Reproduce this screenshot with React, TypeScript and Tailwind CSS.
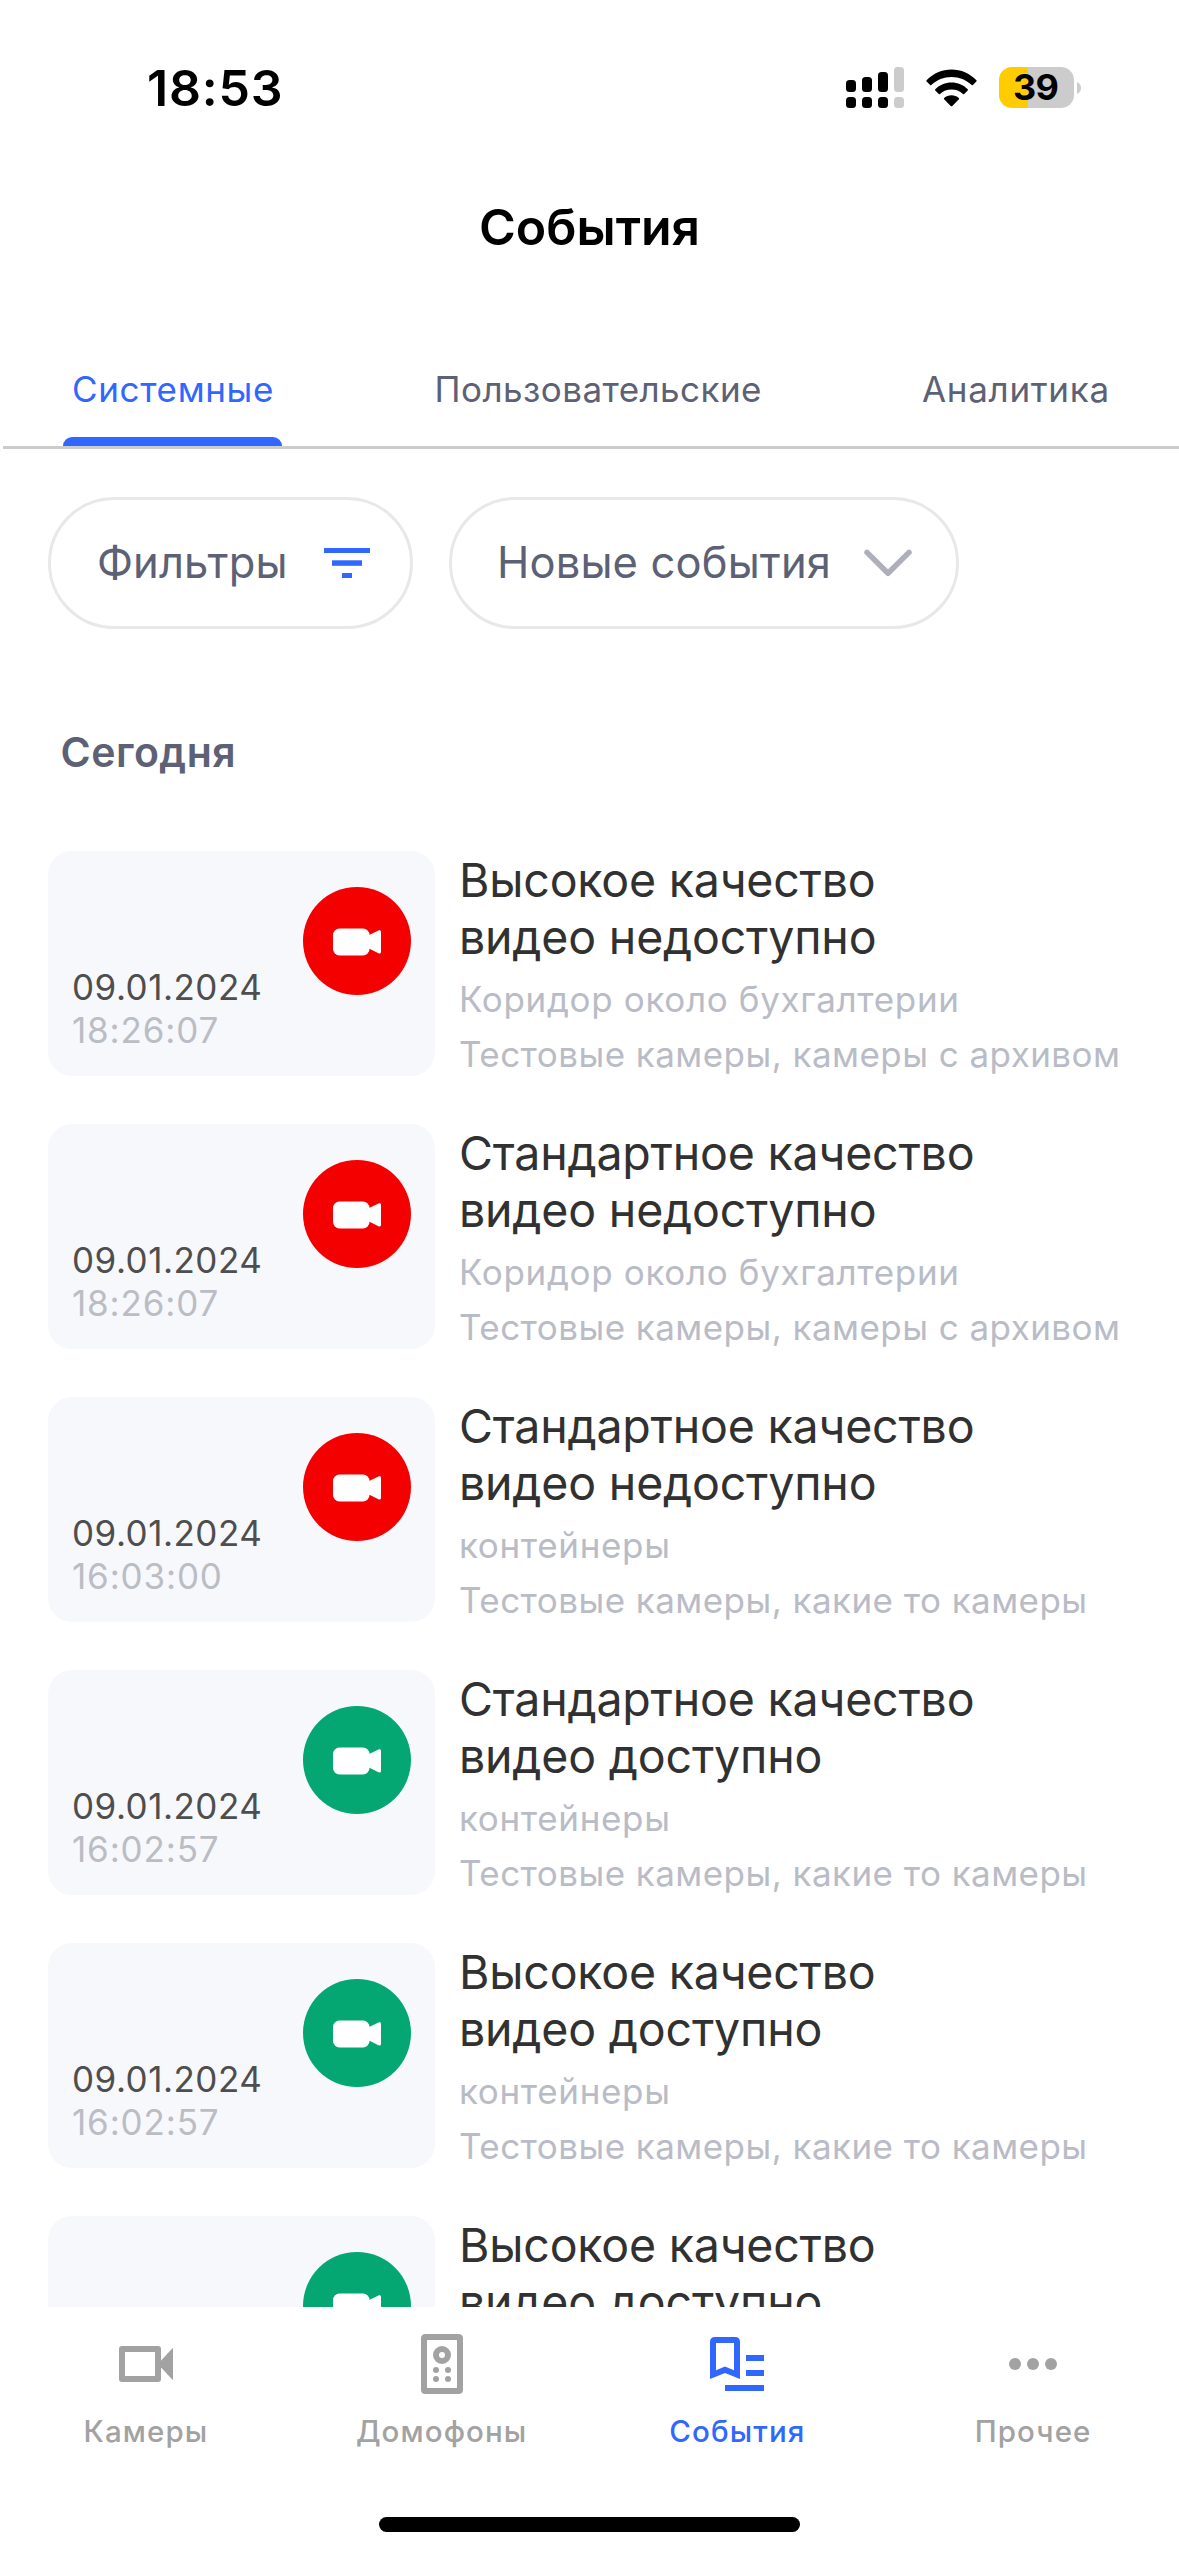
import React from 'react';

type EventItem = {
  quality: string;
  available: boolean;
  date?: string;
  time?: string;
  camera?: string;
  groups?: string;
};

const events: EventItem[] = [
  { quality: 'Высокое качество', available: false, date: '09.01.2024', time: '18:26:07', camera: 'Коридор около бухгалтерии', groups: 'Тестовые камеры, камеры с архивом' },
  { quality: 'Стандартное качество', available: false, date: '09.01.2024', time: '18:26:07', camera: 'Коридор около бухгалтерии', groups: 'Тестовые камеры, камеры с архивом' },
  { quality: 'Стандартное качество', available: false, date: '09.01.2024', time: '16:03:00', camera: 'контейнеры', groups: 'Тестовые камеры, какие то камеры' },
  { quality: 'Стандартное качество', available: true, date: '09.01.2024', time: '16:02:57', camera: 'контейнеры', groups: 'Тестовые камеры, какие то камеры' },
  { quality: 'Высокое качество', available: true, date: '09.01.2024', time: '16:02:57', camera: 'контейнеры', groups: 'Тестовые камеры, какие то камеры' },
  { quality: 'Высокое качество', available: true },
];

const SignalIcon = () => (
  <svg width="58" height="41" viewBox="0 0 58 41">
    <rect x="0" y="13" width="10" height="12" rx="3.5" />
    <rect x="16" y="10" width="10" height="15" rx="3.5" />
    <rect x="32" y="5" width="10" height="20" rx="3.5" />
    <rect x="48" y="0" width="10" height="25" rx="3.5" fill="#cccccc" />
    <rect x="0" y="30" width="10" height="11" rx="3.5" />
    <rect x="16" y="30" width="10" height="11" rx="3.5" />
    <rect x="32" y="30" width="10" height="11" rx="3.5" />
    <rect x="48" y="30" width="10" height="11" rx="3.5" fill="#cccccc" />
  </svg>
);

const WifiIcon = () => (
  <svg width="51" height="38" viewBox="0 0 51 38">
    <path d="M0.6 11.2C7.3 4.4 16 0.5 25.5 0.5S43.7 4.4 50.4 11.2C50.8 11.6 50.8 12 50.4 12.4L46.9 16C46.5 16.4 46.1 16.3 45.7 16C40.3 10.8 33.2 7.9 25.5 7.9S10.7 10.8 5.3 16C4.9 16.3 4.5 16.4 4.1 16L0.6 12.4C0.2 12 0.2 11.6 0.6 11.2Z" />
    <path d="M9.3 20.2C13.7 15.9 19.3 13.5 25.5 13.5S37.3 15.9 41.7 20.2C42.1 20.6 42.1 21 41.7 21.4L38.2 24.9C37.8 25.3 37.4 25.2 37 24.9C33.8 22 29.9 20.5 25.5 20.5S17.2 22 14 24.9C13.6 25.2 13.2 25.3 12.8 24.9L9.3 21.4C8.9 21 8.9 20.6 9.3 20.2Z" />
    <path d="M18.2 29C20.2 27.3 22.7 26.3 25.5 26.3S30.8 27.3 32.8 29C33.3 29.4 33.3 29.9 32.9 30.3L26.3 36.9C25.8 37.4 25.2 37.4 24.7 36.9L18.1 30.3C17.7 29.9 17.7 29.4 18.2 29Z" />
  </svg>
);

const Battery = () => (
  <div className="flex items-center">
    <div className="flex h-[41px] w-[75px] items-center justify-center rounded-[13px] bg-[linear-gradient(to_right,#ffcc00_29px,#cccccc_29px)]">
      <span className="mr-[2px] text-[36px] leading-[41px] font-bold tracking-[-0.8px]">39</span>
    </div>
    <svg className="ml-[3px]" width="4" height="12" viewBox="0 0 4 12">
      <path d="M0 0C2.5 1 4 3.3 4 6S2.5 11 0 12Z" fill="#cccccc" />
    </svg>
  </div>
);

const StatusBar = () => (
  <div className="flex h-[197px] shrink-0 pt-[58px] pl-[147px]">
    <span className="w-[699px] text-[50px] leading-[60px] font-semibold tracking-[0.8px]">18:53</span>
    <div className="mt-[9px] flex h-[41px] items-center gap-[22px]">
      <SignalIcon />
      <WifiIcon />
      <Battery />
    </div>
  </div>
);

const FilterIcon = () => (
  <svg width="46" height="30" viewBox="0 0 46 30" fill="#3067ff">
    <rect x="0" y="0" width="46" height="5" />
    <rect x="8" y="12.3" width="30" height="5.5" />
    <rect x="18" y="25" width="10" height="5" />
  </svg>
);

const ChevronIcon = () => (
  <svg width="48" height="28" viewBox="0 0 48 28" fill="none" stroke="#adafba" strokeWidth="5.5" strokeLinecap="round" strokeLinejoin="round">
    <path d="M3 3.4L24 24.3L45 3.4" />
  </svg>
);

const VideoIcon = () => (
  <svg width="48" height="28" viewBox="0 0 48 28" fill="#ffffff">
    <rect x="0" y="0.5" width="36.5" height="27" rx="6.5" />
    <path d="M35 7.6L45.5 2.5C46.9 1.8 48 2.5 48 4V23.7C48 25.2 46.9 25.9 45.5 25.2L35 20.1Z" />
  </svg>
);

const EventRow: React.FC<{ item: EventItem }> = ({ item }) => (
  <article className="flex h-[225px] shrink-0 gap-6">
    <div className="flex w-[387px] shrink-0 rounded-[24px] bg-[#f7f8fc] px-6">
      {item.date && (
        <div className="self-end pb-6 text-[35px] leading-[43px]">
          <p className="tracking-[0.5px] text-[#4e4e4e]">{item.date}</p>
          <p className="tracking-[0.85px] text-[#bbbdc5]">{item.time}</p>
        </div>
      )}
      <div className={`mt-9 ml-auto flex size-[108px] items-center justify-center rounded-full pt-px ${item.available ? 'bg-[#04a771]' : 'bg-[#f50000]'}`}>
        <VideoIcon />
      </div>
    </div>
    <div className="pt-px whitespace-nowrap">
      <h3 className="text-[46.5px] leading-[57px] tracking-[-0.2px] text-[#313131]">
        {item.quality}
        <br />
        {item.available ? 'видео доступно' : 'видео недоступно'}
      </h3>
      {item.camera && (
        <div className="mt-[6px] text-[35px] leading-[55px] text-[#b9bcc6]">
          <p className="tracking-[0.66px]">{item.camera}</p>
          <p className="tracking-[0.45px]">{item.groups}</p>
        </div>
      )}
    </div>
  </article>
);

const navItems = [
  {
    label: 'Камеры',
    active: false,
    icon: (
      <>
        <path fillRule="evenodd" d="M4 6H16Q17 6 17 7V17Q17 18 16 18H4Q3 18 3 17V7Q3 6 4 6ZM5 8V16H15V8Z" />
        <path d="M17 10.8L21 6.6V17.4L17 13.2Z" />
      </>
    ),
  },
  {
    label: 'Домофоны',
    active: false,
    icon: (
      <>
        <path fillRule="evenodd" d="M6.5 2H17.5Q19 2 19 3.5V20.5Q19 22 17.5 22H6.5Q5 22 5 20.5V3.5Q5 2 6.5 2ZM7 4V20H17V4Z" />
        <circle cx="12" cy="9" r="2" fill="none" stroke="currentColor" strokeWidth="2" />
        <circle cx="10" cy="14" r="1" />
        <circle cx="14" cy="14" r="1" />
        <circle cx="10" cy="17" r="1" />
        <circle cx="14" cy="17" r="1" />
      </>
    ),
  },
  {
    label: 'События',
    active: true,
    icon: (
      <>
        <path fillRule="evenodd" d="M4.700 3H11.300Q13 3 13 4.700V17L8 15L3 17V4.700Q3 3 4.700 3ZM5 5V14.050L8 12.850L11 14.050V5Z" />
        <path d="M15 9H21V11H15ZM15 14H21V16H15ZM8 19H21V21H8Z" />
      </>
    ),
  },
  {
    label: 'Прочее',
    active: false,
    icon: (
      <>
        <circle cx="6" cy="12" r="2" />
        <circle cx="12" cy="12" r="2" />
        <circle cx="18" cy="12" r="2" />
      </>
    ),
  },
];

export default function App() {
  return (
    <div className="flex h-[2556px] w-[1179px] flex-col overflow-hidden bg-white font-['Inter','Liberation_Sans',sans-serif] text-black">
      <StatusBar />
      <h1 className="shrink-0 text-center text-[50px] leading-[60px] font-semibold">События</h1>

      {/* Tabs */}
      <div className="ml-[3px] flex h-[192px] shrink-0 items-end border-b-[3px] border-[#cccccc] text-[35px] leading-[44px] whitespace-nowrap text-[#5c6175]">
        <div className="ml-[59.5px] flex w-[219px] flex-col text-[#3067ff]">
          <span className="pl-[9.5px] tracking-[0.65px]">Системные</span>
          <div className="mt-[26px] h-[9px] rounded-t-[9px] bg-[#3067ff]" />
        </div>
        <span className="ml-[153px] pb-[35px] tracking-[0.45px]">Пользовательские</span>
        <span className="ml-[160px] pb-[35px] tracking-[0.7px]">Аналитика</span>
      </div>

      {/* Filters */}
      <div className="mt-12 ml-12 flex h-[132px] shrink-0 gap-9 text-[43.5px] whitespace-nowrap text-[#5c6175]">
        <button className="flex w-[365px] items-center justify-between rounded-full border-[3px] border-[#e7e8e9] pr-10 pl-[46px] tracking-[0.1px]">
          Фильтры
          <FilterIcon />
        </button>
        <button className="flex w-[510px] items-center justify-between rounded-full border-[3px] border-[#e7e8e9] pr-[44px] pl-[45px] tracking-[0.15px]">
          Новые события
          <ChevronIcon />
        </button>
      </div>

      <h2 className="mt-[93px] ml-[60.5px] shrink-0 text-[41px] leading-[60px] font-semibold tracking-[0.5px] text-[#5c6175]">Сегодня</h2>

      <main className="mt-[69px] flex min-h-0 flex-1 flex-col gap-12 overflow-hidden pl-12">
        {events.map((item, idx) => (
          <EventRow key={idx} item={item} />
        ))}
      </main>

      {/* Bottom navigation */}
      <footer className="flex h-[249px] shrink-0 flex-col items-center bg-white pt-[21px]">
        <nav className="grid w-[1183px] grid-cols-4">
          {navItems.map((item) => (
            <div key={item.label} className={`flex flex-col items-center gap-[13px] ${item.active ? 'text-[#3067ff]' : 'text-[#a2a2a2]'}`}>
              <svg width="72" height="72" viewBox="0 0 24 24" fill="currentColor">
                {item.icon}
              </svg>
              <span className="text-[29.5px] leading-[36px] font-[450] tracking-[1.1px]">{item.label}</span>
            </div>
          ))}
        </nav>
        <div className="mt-[68px] h-[15px] w-[421px] rounded-full bg-black" />
      </footer>
    </div>
  );
}
